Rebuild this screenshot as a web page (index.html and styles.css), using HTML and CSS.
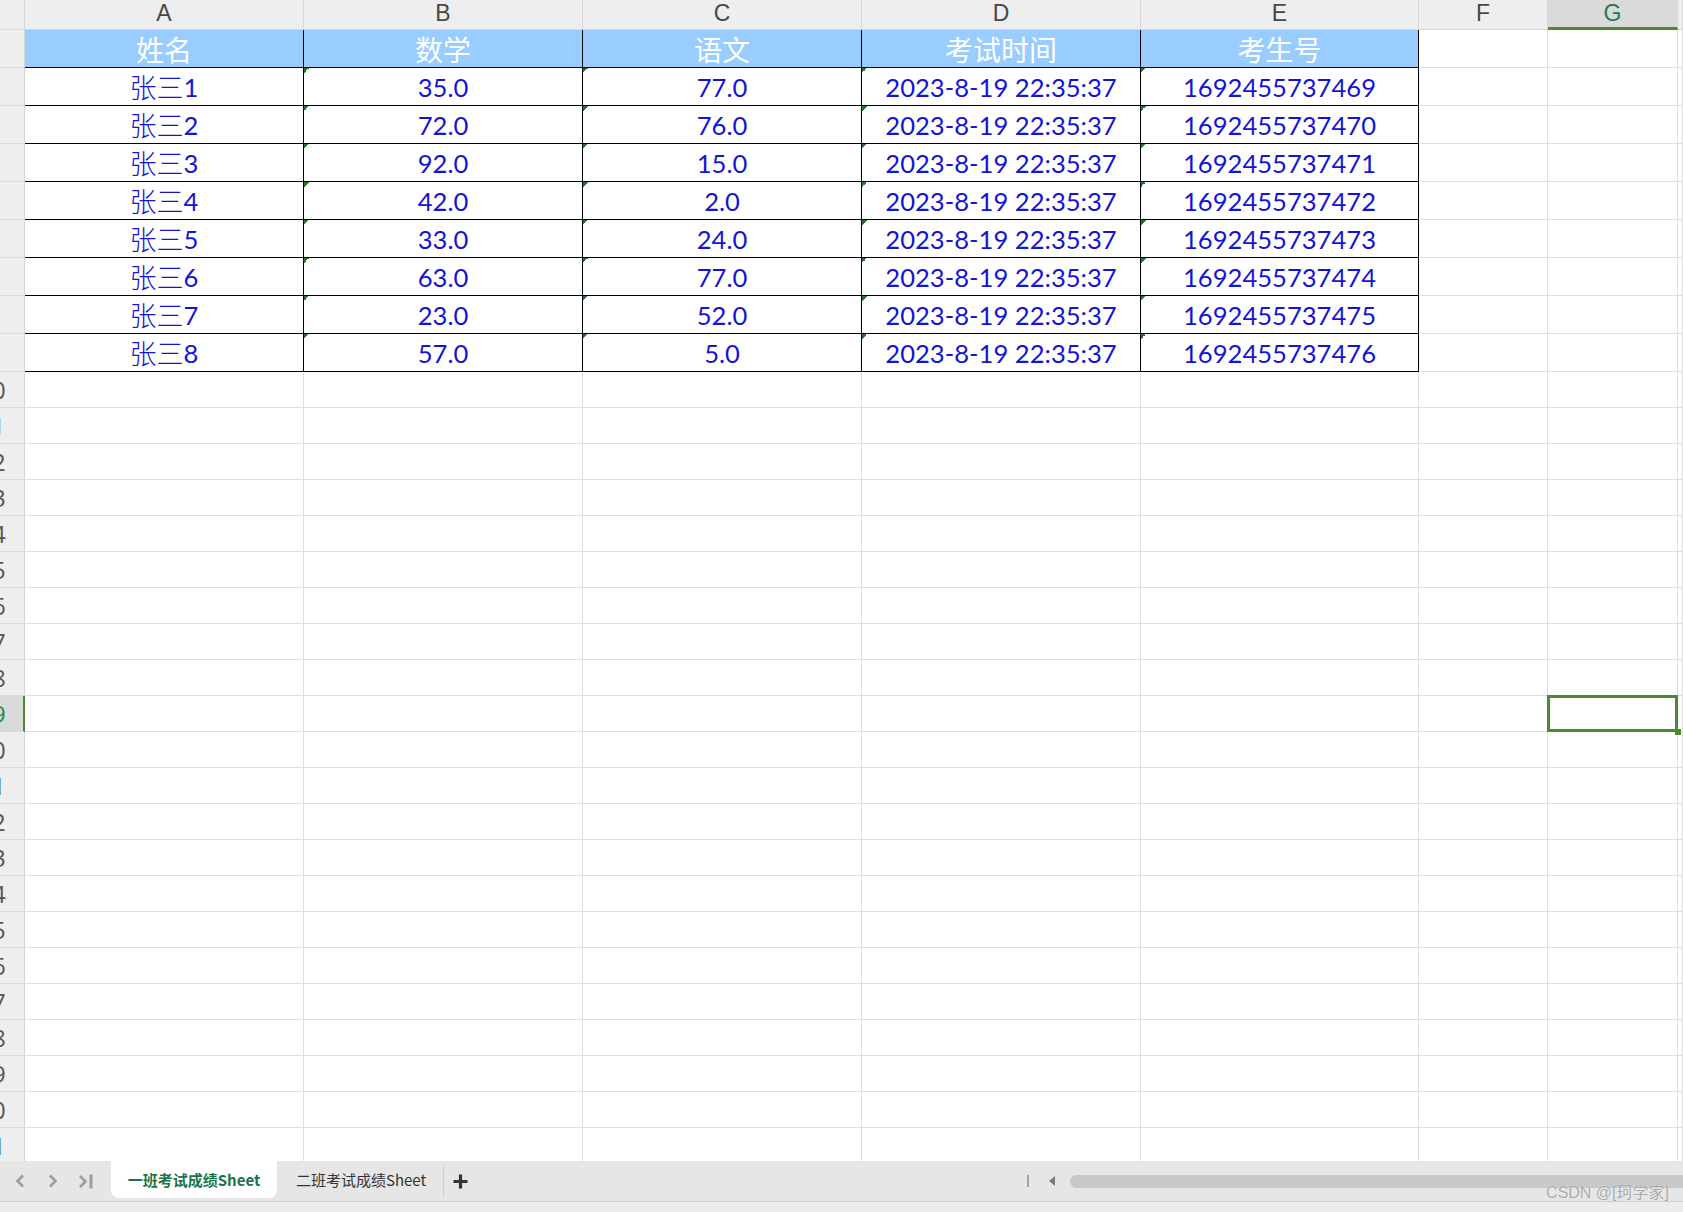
FILE: index.html
```html
<!DOCTYPE html>
<html lang="zh-CN">
<head>
<meta charset="utf-8">
<title>一班考试成绩Sheet</title>
<link rel="stylesheet" href="styles.css">
</head>
<body>
<div class="sheet">
  <div class="row hd"><div class="rh"></div><div class="c ca">A</div><div class="c cb">B</div><div class="c cc">C</div><div class="c cd">D</div><div class="c ce">E</div><div class="c cf">F</div><div class="c cg sel">G</div><div class="c ch"></div></div>
  <div class="row"><div class="rh"><span>1</span></div><div class="c ca t th">姓名</div><div class="c cb t th">数学</div><div class="c cc t th">语文</div><div class="c cd t th">考试时间</div><div class="c ce t th">考生号</div><div class="c cf"></div><div class="c cg"></div><div class="c ch"></div></div>
  <div class="row"><div class="rh"><span>2</span></div><div class="c ca t"><span class="cj">张三</span>1</div><div class="c cb t m">35.0</div><div class="c cc t m">77.0</div><div class="c cd t m">2023-8-19 22:35:37</div><div class="c ce t m">1692455737469</div><div class="c cf"></div><div class="c cg"></div><div class="c ch"></div></div>
  <div class="row"><div class="rh"><span>3</span></div><div class="c ca t"><span class="cj">张三</span>2</div><div class="c cb t m">72.0</div><div class="c cc t m">76.0</div><div class="c cd t m">2023-8-19 22:35:37</div><div class="c ce t m">1692455737470</div><div class="c cf"></div><div class="c cg"></div><div class="c ch"></div></div>
  <div class="row"><div class="rh"><span>4</span></div><div class="c ca t"><span class="cj">张三</span>3</div><div class="c cb t m">92.0</div><div class="c cc t m">15.0</div><div class="c cd t m">2023-8-19 22:35:37</div><div class="c ce t m">1692455737471</div><div class="c cf"></div><div class="c cg"></div><div class="c ch"></div></div>
  <div class="row"><div class="rh"><span>5</span></div><div class="c ca t"><span class="cj">张三</span>4</div><div class="c cb t m">42.0</div><div class="c cc t m">2.0</div><div class="c cd t m">2023-8-19 22:35:37</div><div class="c ce t m">1692455737472</div><div class="c cf"></div><div class="c cg"></div><div class="c ch"></div></div>
  <div class="row"><div class="rh"><span>6</span></div><div class="c ca t"><span class="cj">张三</span>5</div><div class="c cb t m">33.0</div><div class="c cc t m">24.0</div><div class="c cd t m">2023-8-19 22:35:37</div><div class="c ce t m">1692455737473</div><div class="c cf"></div><div class="c cg"></div><div class="c ch"></div></div>
  <div class="row"><div class="rh"><span>7</span></div><div class="c ca t"><span class="cj">张三</span>6</div><div class="c cb t m">63.0</div><div class="c cc t m">77.0</div><div class="c cd t m">2023-8-19 22:35:37</div><div class="c ce t m">1692455737474</div><div class="c cf"></div><div class="c cg"></div><div class="c ch"></div></div>
  <div class="row"><div class="rh"><span>8</span></div><div class="c ca t"><span class="cj">张三</span>7</div><div class="c cb t m">23.0</div><div class="c cc t m">52.0</div><div class="c cd t m">2023-8-19 22:35:37</div><div class="c ce t m">1692455737475</div><div class="c cf"></div><div class="c cg"></div><div class="c ch"></div></div>
  <div class="row"><div class="rh"><span>9</span></div><div class="c ca t"><span class="cj">张三</span>8</div><div class="c cb t m">57.0</div><div class="c cc t m">5.0</div><div class="c cd t m">2023-8-19 22:35:37</div><div class="c ce t m">1692455737476</div><div class="c cf"></div><div class="c cg"></div><div class="c ch"></div></div>
  <div class="row e"><div class="rh"><span>10</span></div><div class="c ca"></div><div class="c cb"></div><div class="c cc"></div><div class="c cd"></div><div class="c ce"></div><div class="c cf"></div><div class="c cg"></div><div class="c ch"></div></div>
  <div class="row e"><div class="rh lb"><span>11</span></div><div class="c ca"></div><div class="c cb"></div><div class="c cc"></div><div class="c cd"></div><div class="c ce"></div><div class="c cf"></div><div class="c cg"></div><div class="c ch"></div></div>
  <div class="row e"><div class="rh"><span>12</span></div><div class="c ca"></div><div class="c cb"></div><div class="c cc"></div><div class="c cd"></div><div class="c ce"></div><div class="c cf"></div><div class="c cg"></div><div class="c ch"></div></div>
  <div class="row e"><div class="rh"><span>13</span></div><div class="c ca"></div><div class="c cb"></div><div class="c cc"></div><div class="c cd"></div><div class="c ce"></div><div class="c cf"></div><div class="c cg"></div><div class="c ch"></div></div>
  <div class="row e"><div class="rh"><span>14</span></div><div class="c ca"></div><div class="c cb"></div><div class="c cc"></div><div class="c cd"></div><div class="c ce"></div><div class="c cf"></div><div class="c cg"></div><div class="c ch"></div></div>
  <div class="row e"><div class="rh"><span>15</span></div><div class="c ca"></div><div class="c cb"></div><div class="c cc"></div><div class="c cd"></div><div class="c ce"></div><div class="c cf"></div><div class="c cg"></div><div class="c ch"></div></div>
  <div class="row e"><div class="rh"><span>16</span></div><div class="c ca"></div><div class="c cb"></div><div class="c cc"></div><div class="c cd"></div><div class="c ce"></div><div class="c cf"></div><div class="c cg"></div><div class="c ch"></div></div>
  <div class="row e"><div class="rh"><span>17</span></div><div class="c ca"></div><div class="c cb"></div><div class="c cc"></div><div class="c cd"></div><div class="c ce"></div><div class="c cf"></div><div class="c cg"></div><div class="c ch"></div></div>
  <div class="row e"><div class="rh"><span>18</span></div><div class="c ca"></div><div class="c cb"></div><div class="c cc"></div><div class="c cd"></div><div class="c ce"></div><div class="c cf"></div><div class="c cg"></div><div class="c ch"></div></div>
  <div class="row e"><div class="rh sel"><span>19</span></div><div class="c ca"></div><div class="c cb"></div><div class="c cc"></div><div class="c cd"></div><div class="c ce"></div><div class="c cf"></div><div class="c cg cur"></div><div class="c ch"></div></div>
  <div class="row e"><div class="rh"><span>20</span></div><div class="c ca"></div><div class="c cb"></div><div class="c cc"></div><div class="c cd"></div><div class="c ce"></div><div class="c cf"></div><div class="c cg"></div><div class="c ch"></div></div>
  <div class="row e"><div class="rh"><span>21</span></div><div class="c ca"></div><div class="c cb"></div><div class="c cc"></div><div class="c cd"></div><div class="c ce"></div><div class="c cf"></div><div class="c cg"></div><div class="c ch"></div></div>
  <div class="row e"><div class="rh"><span>22</span></div><div class="c ca"></div><div class="c cb"></div><div class="c cc"></div><div class="c cd"></div><div class="c ce"></div><div class="c cf"></div><div class="c cg"></div><div class="c ch"></div></div>
  <div class="row e"><div class="rh"><span>23</span></div><div class="c ca"></div><div class="c cb"></div><div class="c cc"></div><div class="c cd"></div><div class="c ce"></div><div class="c cf"></div><div class="c cg"></div><div class="c ch"></div></div>
  <div class="row e"><div class="rh"><span>24</span></div><div class="c ca"></div><div class="c cb"></div><div class="c cc"></div><div class="c cd"></div><div class="c ce"></div><div class="c cf"></div><div class="c cg"></div><div class="c ch"></div></div>
  <div class="row e"><div class="rh"><span>25</span></div><div class="c ca"></div><div class="c cb"></div><div class="c cc"></div><div class="c cd"></div><div class="c ce"></div><div class="c cf"></div><div class="c cg"></div><div class="c ch"></div></div>
  <div class="row e"><div class="rh"><span>26</span></div><div class="c ca"></div><div class="c cb"></div><div class="c cc"></div><div class="c cd"></div><div class="c ce"></div><div class="c cf"></div><div class="c cg"></div><div class="c ch"></div></div>
  <div class="row e"><div class="rh"><span>27</span></div><div class="c ca"></div><div class="c cb"></div><div class="c cc"></div><div class="c cd"></div><div class="c ce"></div><div class="c cf"></div><div class="c cg"></div><div class="c ch"></div></div>
  <div class="row e"><div class="rh"><span>28</span></div><div class="c ca"></div><div class="c cb"></div><div class="c cc"></div><div class="c cd"></div><div class="c ce"></div><div class="c cf"></div><div class="c cg"></div><div class="c ch"></div></div>
  <div class="row e"><div class="rh"><span>29</span></div><div class="c ca"></div><div class="c cb"></div><div class="c cc"></div><div class="c cd"></div><div class="c ce"></div><div class="c cf"></div><div class="c cg"></div><div class="c ch"></div></div>
  <div class="row e"><div class="rh"><span>30</span></div><div class="c ca"></div><div class="c cb"></div><div class="c cc"></div><div class="c cd"></div><div class="c ce"></div><div class="c cf"></div><div class="c cg"></div><div class="c ch"></div></div>
  <div class="row e"><div class="rh db"><span>31</span></div><div class="c ca"></div><div class="c cb"></div><div class="c cc"></div><div class="c cd"></div><div class="c ce"></div><div class="c cf"></div><div class="c cg"></div><div class="c ch"></div></div>
</div>
<div class="tabbar">
  <div class="nav">
    <svg class="ic1" width="10" height="14" viewBox="0 0 10 14"><path d="M8 1.5 L2.5 7 L8 12.5" fill="none" stroke="#9d9d9d" stroke-width="2.6"/></svg>
    <svg class="ic2" width="10" height="14" viewBox="0 0 10 14"><path d="M2 1.5 L7.5 7 L2 12.5" fill="none" stroke="#9d9d9d" stroke-width="2.6"/></svg>
    <svg class="ic3" width="16" height="15" viewBox="0 0 16 15"><path d="M2 2 L7.5 7.5 L2 13" fill="none" stroke="#9d9d9d" stroke-width="2.6"/><path d="M13 0.5 V14.5" stroke="#9d9d9d" stroke-width="3"/></svg>
  </div>
  <div class="tab on">一班考试成绩Sheet</div>
  <div class="tab off">二班考试成绩Sheet</div>
  <div class="sep"></div>
  <div class="add"><svg width="15" height="15" viewBox="0 0 15 15"><path d="M7.5 0.5 V14.5 M0.5 7.5 H14.5" stroke="#333" stroke-width="3.2"/></svg></div>
  <div class="hs">
    <div class="vb"></div>
    <div class="tri"></div>
    <div class="pill"></div>
  </div>
</div>
<div class="strip"></div>
<div class="wm">CSDN @[珂学家]</div>
</body>
</html>
```
FILE: styles.css
```css
html, body {
  margin: 0;
  padding: 0;
}
body {
  width: 1683px;
  height: 1212px;
  overflow: hidden;
  position: relative;
  background: #ffffff;
  font-family: "Noto Sans CJK SC", sans-serif;
}
.sheet {
  height: 1161px;
  overflow: hidden;
}
.row {
  display: flex;
  height: 38px;
}
.row.hd {
  height: 30px;
}
.row.e {
  height: 36px;
}
.c {
  flex: none;
  box-sizing: border-box;
  border-right: 1px solid #dedede;
  border-bottom: 1px solid #dedede;
  display: flex;
  align-items: center;
  justify-content: center;
  white-space: nowrap;
}
.ca, .cb, .cc, .cd { width: 279px; }
.ce { width: 278px; }
.cf { width: 129px; }
.cg { width: 130px; }
.ch { flex: 1 1 auto; }

/* row headers */
.rh {
  flex: none;
  width: 25px;
  box-sizing: border-box;
  background: #eeeeee;
  border-right: 1px solid #d4d4d4;
  border-bottom: 1px solid #dadada;
  overflow: hidden;
  display: flex;
  align-items: center;
  font-family: "Open Sans", sans-serif;
  font-size: 24px;
  color: #555555;
}
.rh span {
  flex: none;
  width: 64px;
  margin-left: -40px;
  text-align: center;
}
.rh.lb { color: #9cc4ea; }
.rh.db { color: #3d5f86; }
.rh.sel {
  background: #d9d9d9;
  border-right: 2px solid #4b8b30;
  color: #1e8a5a;
}

/* column headers */
.hd .c {
  background: #eeeeee;
  border-right-color: #d8d8d8;
  border-bottom-color: #d6d6d6;
  font-family: "Liberation Sans", sans-serif;
  font-size: 23px;
  color: #474747;
  line-height: 26px;
  align-items: flex-start;
}
.hd .c.sel {
  background: #dadada;
  color: #1e7b50;
  border-bottom: 3px solid #4b8b30;
}

/* table cells */
.t {
  border-right-color: #000000;
  border-bottom-color: #000000;
  color: #1414d6;
  font-family: Lato, "Noto Sans CJK SC", sans-serif;
  font-size: 25.6px;
}
.t .cj {
  font-family: "Noto Sans CJK SC", sans-serif;
  font-size: 27px;
  font-weight: 300;
}
.th {
  background: #99ccff;
  color: #ffffff;
  font-family: "Noto Sans CJK SC", sans-serif;
  font-size: 28px;
  font-weight: 400;
}
.m {
  background: linear-gradient(135deg, #2a742a 50%, transparent 50%) 0 0 / 5px 5px no-repeat;
}

/* current cell */
.cur {
  position: relative;
}
.cur::after {
  content: "";
  position: absolute;
  left: -1px;
  top: -1px;
  right: -1px;
  bottom: -1px;
  border: 3px solid #4b8b30;
}
.cur::before {
  content: "";
  position: absolute;
  right: -4px;
  bottom: -4px;
  width: 6px;
  height: 6px;
  background: #4b8b30;
  z-index: 1;
}

/* sheet tab bar */
.tabbar {
  height: 40px;
  background: #e6e6e6;
  display: flex;
  align-items: flex-start;
}
.nav {
  width: 111px;
  height: 40px;
  box-sizing: border-box;
  padding-left: 15px;
  display: flex;
  align-items: center;
  flex: none;
}
.nav svg { display: block; flex: none; }
.ic2 { margin-left: 23px; }
.ic3 { margin-left: 20px; }
.tab {
  height: 37px;
  display: flex;
  align-items: center;
  justify-content: center;
  font-size: 15px;
  color: #333333;
  flex: none;
  white-space: nowrap;
}
.tab.on {
  width: 166px;
  background: #ffffff;
  border-radius: 0 0 8px 8px;
  color: #1d7348;
  font-weight: bold;
}
.tab.off {
  padding: 0 17px 0 19px;
}
.sep {
  flex: none;
  width: 1px;
  height: 32px;
  margin-top: 4px;
  background: #cfcfcf;
}
.add {
  flex: none;
  height: 40px;
  margin-left: 9px;
  display: flex;
  align-items: center;
}
.add svg { display: block; }
.hs {
  margin-left: auto;
  width: 656px;
  height: 40px;
  display: flex;
  align-items: center;
  flex: none;
}
.vb {
  flex: none;
  width: 2px;
  height: 12px;
  background: #a2a2a2;
}
.tri {
  flex: none;
  margin-left: 20px;
  width: 0;
  height: 0;
  border-top: 5px solid transparent;
  border-bottom: 5px solid transparent;
  border-right: 6px solid #7d7d7d;
}
.pill {
  flex: none;
  margin-left: 15px;
  width: 640px;
  height: 13px;
  border-radius: 7px;
  background: #c8c8c8;
}
.strip {
  height: 11px;
  box-sizing: border-box;
  background: #ececec;
  border-top: 1px solid #cdcdcd;
}
.wm {
  position: absolute;
  right: 14px;
  bottom: 9px;
  font-family: "Liberation Sans", "Noto Sans CJK SC", sans-serif;
  font-size: 16px;
  color: #a9a9a9;
  text-shadow: 0 0 1px #ffffff;
  white-space: nowrap;
}
```
